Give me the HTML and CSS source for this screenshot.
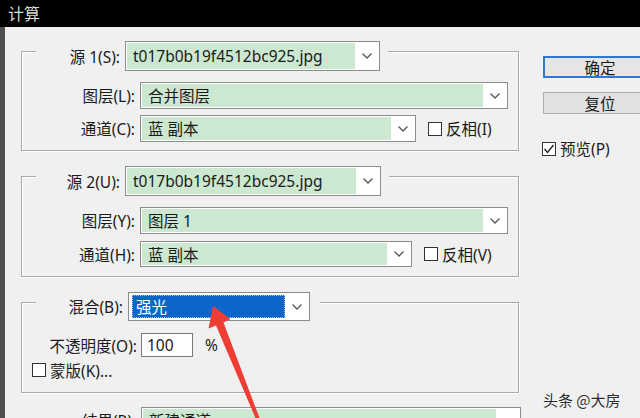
FILE: index.html
```html
<!DOCTYPE html>
<html lang="zh-CN">
<head>
<meta charset="utf-8">
<title>计算</title>
<link rel="stylesheet" href="styles.css">
</head>
<body>
<div class="window">
  <div class="titlebar">计算</div>
  <div class="content">
    <div class="main">
      <div class="group g1">
        <div class="ghead">
          <span class="lbl lh1">源 1(S):</span>
          <div class="combo w-src"><span class="val">t017b0b19f4512bc925.jpg</span><span class="arr"><svg width="10" height="6" viewBox="0 0 10 6"><polyline points="0.5,0.5 5,5 9.5,0.5" fill="none" stroke="#555" stroke-width="1.3"/></svg></span></div>
        </div>
        <div class="row r-a">
          <span class="lbl">图层(L):</span>
          <div class="combo w-wide"><span class="val">合并图层</span><span class="arr"><svg width="10" height="6" viewBox="0 0 10 6"><polyline points="0.5,0.5 5,5 9.5,0.5" fill="none" stroke="#555" stroke-width="1.3"/></svg></span></div>
        </div>
        <div class="row r-b">
          <span class="lbl">通道(C):</span>
          <div class="combo w-ch1"><span class="val">蓝 副本</span><span class="arr"><svg width="10" height="6" viewBox="0 0 10 6"><polyline points="0.5,0.5 5,5 9.5,0.5" fill="none" stroke="#555" stroke-width="1.3"/></svg></span></div>
          <span class="chk"><span class="box"></span>反相(I)</span>
        </div>
      </div>

      <div class="group g2">
        <div class="ghead">
          <span class="lbl lh1">源 2(U):</span>
          <div class="combo w-src2"><span class="val">t017b0b19f4512bc925.jpg</span><span class="arr"><svg width="10" height="6" viewBox="0 0 10 6"><polyline points="0.5,0.5 5,5 9.5,0.5" fill="none" stroke="#555" stroke-width="1.3"/></svg></span></div>
        </div>
        <div class="row r-a">
          <span class="lbl">图层(Y):</span>
          <div class="combo w-wide"><span class="val">图层 1</span><span class="arr"><svg width="10" height="6" viewBox="0 0 10 6"><polyline points="0.5,0.5 5,5 9.5,0.5" fill="none" stroke="#555" stroke-width="1.3"/></svg></span></div>
        </div>
        <div class="row r-c">
          <span class="lbl">通道(H):</span>
          <div class="combo w-ch2"><span class="val">蓝 副本</span><span class="arr"><svg width="10" height="6" viewBox="0 0 10 6"><polyline points="0.5,0.5 5,5 9.5,0.5" fill="none" stroke="#555" stroke-width="1.3"/></svg></span></div>
          <span class="chk"><span class="box"></span>反相(V)</span>
        </div>
      </div>

      <div class="group g3">
        <div class="ghead gh3">
          <span class="lbl lh3">混合(B):</span>
          <div class="combo w-blend"><span class="val sel">强光</span><span class="arr"><svg width="10" height="6" viewBox="0 0 10 6"><polyline points="0.5,0.5 5,5 9.5,0.5" fill="none" stroke="#555" stroke-width="1.3"/></svg></span></div>
        </div>
        <div class="row r-op">
          <span class="lbl lop">不透明度(O):</span>
          <div class="input">100</div>
          <span class="pct">%</span>
        </div>
        <div class="row r-mask">
          <span class="chk"><span class="box"></span>蒙版(K)...</span>
        </div>
      </div>

      <div class="row r-res">
        <span class="lbl lres">结果(R):</span>
        <div class="combo w-res"><span class="val">新建通道</span><span class="arr"><svg width="10" height="6" viewBox="0 0 10 6"><polyline points="0.5,0.5 5,5 9.5,0.5" fill="none" stroke="#555" stroke-width="1.3"/></svg></span></div>
      </div>
    </div>

    <div class="side">
      <div class="btn default">确定</div>
      <div class="btn">复位</div>
      <span class="chk preview"><span class="box checked"><svg width="12" height="12" viewBox="0 0 12 12"><polyline points="1.5,6 4.5,9.5 10.5,2" fill="none" stroke="#222" stroke-width="1.4"/></svg></span>预览(P)</span>
    </div>
  </div>

  <svg class="arrow" width="640" height="418" viewBox="0 0 640 418">
    <polygon points="213,306 230.5,319 223.5,322.5 259.5,418 255.5,418 216,325.5 208.5,328.5" fill="#ee3d33"/>
  </svg>
  <div class="watermark">头条 @大房</div>
</div>
</body>
</html>
```

FILE: styles.css
```css
html, body {
  margin: 0;
  padding: 0;
  width: 640px;
  height: 418px;
  overflow: hidden;
  background: #f0f0f0;
}

.window {
  position: relative;
  width: 640px;
  height: 418px;
  overflow: hidden;
  font-family: "Noto Sans", "Noto Sans CJK SC", sans-serif;
  font-size: 15.5px;
  color: #1a1a1a;
}

.titlebar {
  height: 27px;
  background: #000;
  color: #dcdcdc;
  font-family: "Noto Sans CJK SC", sans-serif;
  font-size: 16px;
  line-height: 26px;
  padding-left: 8px;
}

.content {
  display: flex;
  height: 391px;
  border-left: 5px solid #4f4f4f;
  background: #f0f0f0;
}

.main {
  margin-left: 16px;
  width: 498px;
  flex: none;
}

.group {
  border: 1px solid #a9a9a9;
  box-shadow: inset 1px 1px 0 #fff, 1px 1px 0 #fff;
}

.g1 { margin-top: 24px; padding-bottom: 8px; }
.g2 { margin-top: 25px; padding-bottom: 9px; }
.g3 { margin-top: 25px; padding-bottom: 14px; }

.ghead {
  display: flex;
  align-items: center;
  width: max-content;
  margin-top: -11px;
  margin-left: 14px;
  padding-right: 8px;
  background: #f0f0f0;
  height: 30px;
}

.gh3 { height: 29px; padding-right: 10px; }

.row {
  display: flex;
  align-items: center;
}

.r-a { margin-top: 11px; height: 27px; }
.r-b { margin-top: 6px; height: 27px; }
.r-c { margin-top: 7px; height: 26px; }
.r-op { margin-top: 12px; height: 24px; }
.r-mask { margin-top: 5px; height: 16px; padding-left: 10px; }
.r-res { margin-top: 14px; height: 27px; }

.lbl {
  width: 113px;
  text-align: right;
  margin-right: 5px;
  white-space: nowrap;
  flex: none;
}

.lh1 { width: 84px; }
.lh3 { width: 87px; }
.lop { width: 115px; margin-right: 4px; }
.lres { width: 115px; }

.combo {
  display: flex;
  align-self: stretch;
  box-sizing: border-box;
  border: 1px solid #8c8c8c;
  background: #fff;
  padding: 1px 0 1px 1px;
  flex: none;
}

.combo .val {
  flex: 1;
  background: #cde8d0;
  padding-left: 6px;
  display: flex;
  align-items: center;
  white-space: nowrap;
  overflow: hidden;
}

.combo .arr {
  width: 24px;
  flex: none;
  display: flex;
  align-items: center;
  justify-content: center;
}

.w-src { width: 255px; }
.w-src2 { width: 256px; }
.w-wide { width: 368px; }
.w-ch1 { width: 276px; }
.w-ch2 { width: 272px; }
.w-blend { width: 182px; padding: 2px 0 2px 3px; }
.w-res { width: 380px; }

.combo .val.sel {
  background: #0b66cc;
  color: #fff;
  outline: 1px dotted #9cc7ee;
  outline-offset: -1px;
  padding-left: 4px;
}

.chk {
  display: inline-flex;
  align-items: center;
  white-space: nowrap;
}

.box {
  width: 14px;
  height: 14px;
  box-sizing: border-box;
  border: 1px solid #333;
  background: #fff;
  margin-right: 4px;
  display: inline-flex;
  align-items: center;
  justify-content: center;
}

.r-b .chk { margin-left: 12px; }
.r-c .chk { margin-left: 12px; }

.input {
  width: 52px;
  align-self: stretch;
  box-sizing: border-box;
  border: 1px solid #7a7a7a;
  background: #fff;
  padding-left: 5px;
  display: flex;
  align-items: center;
}

.pct { margin-left: 12px; }

.side {
  margin-left: 24px;
  display: flex;
  flex-direction: column;
  align-items: flex-start;
  flex: none;
}

.btn {
  width: 114px;
  height: 22px;
  box-sizing: border-box;
  border: 1px solid #adadad;
  background: #e1e1e1;
  display: flex;
  align-items: center;
  justify-content: center;
  font-family: "Noto Sans CJK SC", sans-serif;
  font-size: 15.5px;
  margin-top: 14px;
}

.btn.default {
  margin-top: 29px;
  border: 2px solid #2e78d2;
  background: #e5e5e5;
}

.preview {
  margin-top: 23px;
  margin-left: -1px;
}

.box.checked { background: #fff; }

.arrow {
  position: absolute;
  left: 0;
  top: 0;
  pointer-events: none;
}

.watermark {
  position: absolute;
  left: 543px;
  top: 389px;
  font-family: "Noto Sans CJK SC", sans-serif;
  font-size: 15px;
  color: #2a2a2a;
  text-shadow: 0 0 2px #fff, 0 0 1px #fff;
}
```
